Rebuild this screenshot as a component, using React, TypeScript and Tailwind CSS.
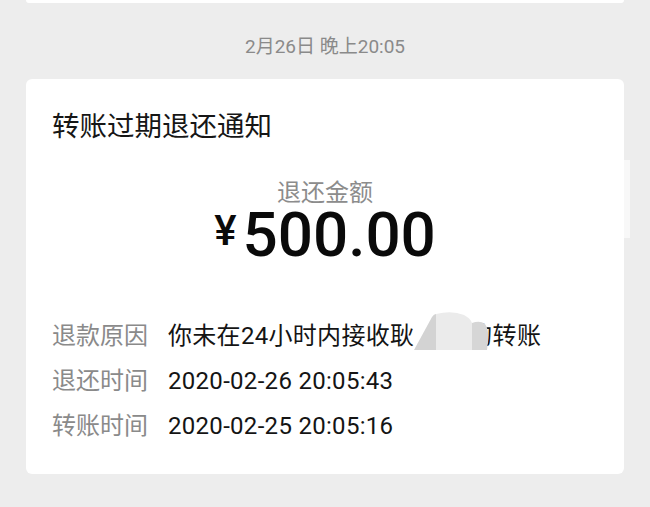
import React from "react";

const font = "font-['Roboto','Noto_Sans_CJK_SC',sans-serif]";

function Row({ label, children }: { label: string; children: React.ReactNode }) {
  return (
    <div className="flex h-[45px] items-center text-[24px] leading-[45px]">
      <div className="w-[116px] shrink-0 text-[#8a8a8a]">{label}</div>
      <div className="relative tracking-[0.3px] text-[#141414]">{children}</div>
    </div>
  );
}

export default function App() {
  return (
    <div className={`relative h-[507px] w-[650px] overflow-hidden bg-[#ededed] ${font}`}>
      <div className="mx-[26px] h-[3px] rounded-b-[4px] bg-white" />
      <div className="mt-[32px] text-center text-[19px] leading-[24px] text-[#8a8a8a]">
        2月26日 晚上20:05
      </div>
      <div className="mx-[26px] mt-[20px] rounded-[6px] bg-white pb-[25px] pl-[26px] pr-[26px] pt-[30px]">
        <div className="text-[27.5px] leading-[36px] text-[#161616]">转账过期退还通知</div>
        <div className="mt-[33px] text-center text-[24px] leading-[30px] text-[#8c8c8c]">退还金额</div>
        <div className="flex items-start justify-center text-[#0a0a0a]">
          <span className="mr-[6px] mt-[2px] text-[42px] font-medium leading-[42px]">¥</span>
          <span className="text-[62px] font-medium leading-[54px]">500.00</span>
        </div>
        <div className="mt-[52px]">
          <Row label="退款原因">
            <span>你未在24小时内接收耿</span>
            <span className="tracking-[3px] text-transparent">某某</span>
            <span>的转账</span>
            <svg
              className="absolute left-[244px] top-[-3px]"
              width="80"
              height="40"
              viewBox="0 0 80 40"
            >
              <path d="M24,39 L24,3 Q40,-1 52,4 Q58,7 60,12 L60,39 Z" fill="#ebebeb" />
              <path d="M2,39 L20,6 Q22,3 24,3 L24,39 Z" fill="#d3d3d3" />
              <path d="M60,39 L60,12 Q68,9 73,13 Q77,18 76,30 L75,39 Z" fill="#d6d6d6" />
            </svg>
          </Row>
          <Row label="退还时间">2020-02-26 20:05:43</Row>
          <Row label="转账时间">2020-02-25 20:05:16</Row>
        </div>
      </div>
      <div className="absolute left-[624px] top-[160px] h-[78px] w-[6px] bg-[#f8f8f8]" />
    </div>
  );
}
